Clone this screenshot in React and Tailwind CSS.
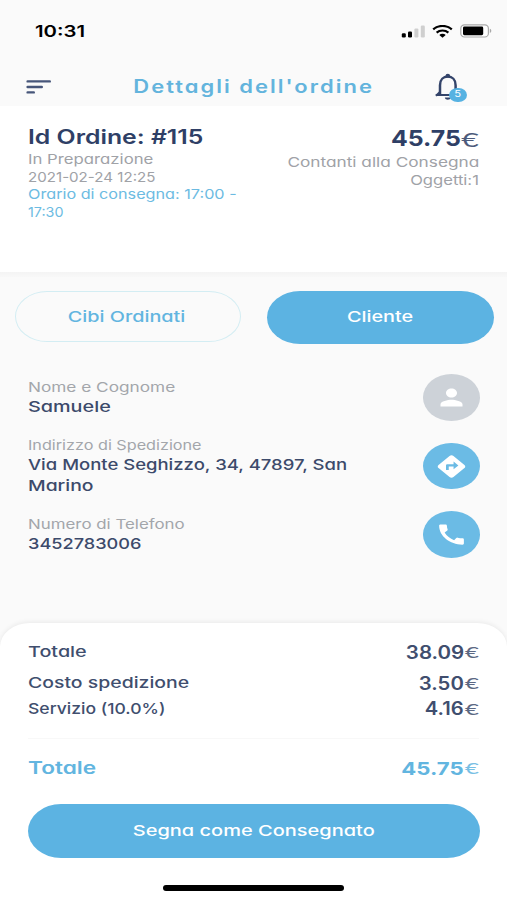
import { clsx } from "clsx";
import { MdCall, MdDirections, MdPerson } from "react-icons/md";

const contacts = [
  {
    label: "Nome e Cognome",
    labelClass: "scale-x-[1.275]",
    lines: [{ text: "Samuele", className: "scale-x-[1.32]" }],
  },
  {
    label: "Indirizzo di Spedizione",
    labelClass: "scale-x-[1.2]",
    lines: [
      { text: "Via Monte Seghizzo, 34, 47897, San", className: "scale-x-[1.233]" },
      { text: "Marino", className: "scale-x-[1.29]" },
    ],
  },
  {
    label: "Numero di Telefono",
    labelClass: "scale-x-[1.25]",
    lines: [{ text: "3452783006", className: "scale-x-[1.21]" }],
  },
];

const actions = [
  { name: "person", Icon: MdPerson, className: "bg-[#cdd2d8]" },
  { name: "directions", Icon: MdDirections, className: "bg-[#6bbbe5]" },
  { name: "call", Icon: MdCall, className: "bg-[#6bbbe5]" },
];

// Wide line of text that keeps its left edge
function Line({ className, children }) {
  return <div className={clsx("w-fit origin-left whitespace-nowrap", className)}>{children}</div>;
}

// Same, anchored on the right
function LineEnd({ className, children }) {
  return <div className={clsx("ml-auto w-fit origin-right whitespace-nowrap", className)}>{children}</div>;
}

function Amount({ value, className, euroClass = "h-[16px] w-[15px] scale-x-[1.5] text-[16px]" }) {
  return (
    <div className="ml-auto flex items-center">
      <span className={clsx("origin-right", className)}>{value}</span>
      <span
        className={clsx(
          "flex origin-right items-end justify-end font-['Lato',sans-serif] leading-none font-normal opacity-85",
          euroClass,
        )}
      >
        €
      </span>
    </div>
  );
}

function StatusBar() {
  return (
    <div className="flex h-[62px] items-center justify-between pl-[35px] pr-[14px] text-black">
      <Line className="scale-x-[1.27] text-[16px] font-semibold">10:31</Line>
      <div className="flex items-center">
        <svg width="25" height="13" viewBox="0 0 25 13" className="mr-[6px]">
          <rect x="0.8" y="8.2" width="4" height="4.2" rx="1.2" fill="#000" />
          <rect x="7" y="6.4" width="4" height="6" rx="1.2" fill="#000" />
          <rect x="13.4" y="3.4" width="4" height="9" rx="1.2" fill="#cfcfcf" />
          <rect x="19.8" y="0.5" width="4" height="11.9" rx="1.2" fill="#cfcfcf" />
        </svg>
        <svg width="21" height="13" viewBox="0 0 21 13" className="mr-[7px]" fill="none" stroke="#000">
          <path d="M1.2 4.4C6.2 -0.2 14.8 -0.2 19.8 4.4" strokeWidth="2.2" />
          <path d="M4.6 7.6C7.8 4.7 13.2 4.7 16.4 7.6" strokeWidth="2.1" />
          <path d="M7.3 9.9C9 8.3 12 8.3 13.7 9.9L10.5 12.7Z" fill="#000" stroke="none" />
        </svg>
        <svg width="33" height="14" viewBox="0 0 33 14">
          <rect x="0.8" y="0.8" width="27.6" height="12.2" rx="3.6" fill="#fff" stroke="#a9a9a9" strokeWidth="1.2" />
          <rect x="3" y="2.6" width="20.2" height="8.6" rx="1.4" fill="#000" />
          <path d="M29.8 4.8C31.8 5.4 31.8 8.4 29.8 9Z" fill="#a9a9a9" />
        </svg>
      </div>
    </div>
  );
}

function Header() {
  return (
    <div className="flex h-[44px] items-center justify-between pl-[26px] pr-[40px] pt-[5px]">
      <svg
        width="26"
        height="16"
        viewBox="0 0 26 16"
        className="mt-px"
        fill="none"
        stroke="#47567a"
        strokeWidth="2.4"
        strokeLinecap="round"
      >
        <path d="M1.6 2.4H23.8M1.6 8H15.8M1.6 13.4H7.8" />
      </svg>
      <h1 className="origin-center scale-x-[1.22] whitespace-nowrap pl-[18px] text-[18px] font-semibold tracking-[1.65px] text-[#63b4dd]">
        Dettagli dell'ordine
      </h1>
      <div className="relative">
        <svg width="33" height="30" viewBox="0 0 33 30" fill="none" stroke="#34446a">
          <path
            d="M6 22.6V13.2C6 7.6 9.4 4.6 13.8 4.6S21.6 7.6 21.6 13.2V22.6"
            strokeWidth="2.5"
          />
          <path d="M2.6 23.2L5.4 20.6M22.2 20.6L25 23.2M2.4 23H25.2" strokeWidth="2" strokeLinecap="round" />
          <ellipse cx="13.8" cy="3.8" rx="2.3" ry="2" fill="#34446a" stroke="none" />
          <path d="M10.8 25.4H16.8C16.4 28.4 11.2 28.4 10.8 25.4Z" fill="#34446a" stroke="none" />
        </svg>
        <span className="absolute right-[0.5px] top-[16px] flex h-[14.5px] w-[17.5px] items-center justify-center rounded-[50%] bg-[#56b2e2] pb-[3px] text-[9px] text-white">
          <span className="scale-x-125">5</span>
        </span>
      </div>
    </div>
  );
}

function OrderSummary() {
  return (
    <div className="flex h-[166px] justify-between bg-white px-[28px] pt-[18px] text-[13.5px] leading-[17.7px] text-[#a0a2a7]">
      <div>
        <Line className="scale-x-[1.24] text-[20px] font-semibold leading-[26px] text-[#2f3f66]">Id Ordine: #115</Line>
        <Line className="mt-px scale-x-[1.24]">In Preparazione</Line>
        <Line className="scale-x-[1.12]">2021-02-24 12:25</Line>
        <Line className="scale-x-[1.2] text-[#6cbbe2]">Orario di consegna: 17:00 -</Line>
        <Line className="scale-x-[1.06] text-[#6cbbe2]">17:30</Line>
      </div>
      <div>
        <div className="flex leading-[29px] text-[#2f3f66]">
          <Amount
            value="45.75"
            className="scale-x-[1.13] text-[22px] font-bold"
            euroClass="h-[20px] w-[18px] scale-x-[1.6] text-[19px]"
          />
        </div>
        <LineEnd className="scale-x-[1.277] leading-[18px]">Contanti alla Consegna</LineEnd>
        <LineEnd className="scale-x-[1.23] leading-[18px]">Oggetti:1</LineEnd>
      </div>
    </div>
  );
}

function CustomerTabs() {
  return (
    <div className="flex items-start justify-between pl-[14.5px] pr-[13.5px] pt-[14px] text-[15px] font-medium">
      <button className="flex h-[51px] w-[226px] items-center justify-center rounded-[32px/25.5px] border border-[#d3edf3] pt-px pr-px">
        <span className="scale-x-[1.32] text-[#62b5e0]">Cibi Ordinati</span>
      </button>
      <button className="flex h-[53px] w-[227px] items-center justify-center rounded-[33px/26.5px] bg-[#5cb3e2] pb-px">
        <span className="scale-x-[1.32] text-white">Cliente</span>
      </button>
    </div>
  );
}

function Customer() {
  return (
    <div className="flex justify-between pl-[28px] pr-[27px] pt-[30px]">
      <div className="flex flex-col gap-[19px] pt-[4px]">
        {contacts.map((c) => (
          <div key={c.label}>
            <Line className={clsx("text-[13.5px] leading-[19px] text-[#a3a6ab]", c.labelClass)}>{c.label}</Line>
            {c.lines.map((l) => (
              <Line key={l.text} className={clsx("text-[15px] font-medium leading-[20.3px] text-[#3c4a6b]", l.className)}>
                {l.text}
              </Line>
            ))}
          </div>
        ))}
      </div>
      <div className="flex flex-col gap-[22px]">
        {actions.map(({ name, Icon, className }) => (
          <button
            key={name}
            className={clsx("flex h-[46.7px] w-[57px] items-center justify-center rounded-[50%]", className)}
          >
            <Icon className="h-[27px] w-[33px] text-white" preserveAspectRatio="none" />
          </button>
        ))}
      </div>
    </div>
  );
}

function Totals() {
  return (
    <div className="h-[277px] rounded-t-[30px_24px] bg-white px-[28px] shadow-[0_-1px_5px_rgba(0,0,0,0.07)]">
      <div className="pt-[16px] text-[15px] font-medium text-[#404e6e]">
        <div className="flex h-[26px] items-center">
          <Line className="pt-px scale-x-[1.32]">Totale</Line>
          <Amount value="38.09" className="scale-x-[1.14] text-[18px] font-semibold" />
        </div>
        <div className="mt-[5px] flex h-[26px] items-center">
          <Line className="pt-px scale-x-[1.295]">Costo spedizione</Line>
          <Amount value="3.50" className="scale-x-[1.13] text-[18px] font-semibold" />
        </div>
        <div className="flex h-[25px] items-center">
          <Line className="pt-px scale-x-[1.17]">Servizio (10.0%)</Line>
          <Amount value="4.16" className="scale-x-[1.12] text-[18px] font-semibold" />
        </div>
      </div>
      <div className="mt-[17px] border-t border-[#f8f8f8]" />
      <div className="mt-[16px] flex h-[26px] items-center text-[17px] font-semibold text-[#62b5e0]">
        <Line className="pt-px scale-x-[1.33]">Totale</Line>
        <Amount value="45.75" className="scale-x-[1.23] text-[18px] font-bold" />
      </div>
      <button className="-mr-px mt-[23px] flex h-[54px] w-[452px] items-center justify-center rounded-[33px/27px] bg-[#5cb3e2] text-[15px] font-medium text-white">
        <span className="scale-x-[1.333]">Segna come Consegnato</span>
      </button>
      <div className="mx-auto mt-[27px] h-[6px] w-[181px] rounded-full bg-black" />
    </div>
  );
}

export default function App() {
  return (
    <div className="flex h-[900px] w-[507px] flex-col overflow-hidden bg-[#fafafa] font-['Inter',sans-serif] [font-feature-settings:'cv11']">
      <StatusBar />
      <Header />
      <OrderSummary />
      <div className="h-[5px] bg-linear-to-b from-[#f4f4f4] to-[#f8f8f8]" />
      <CustomerTabs />
      <Customer />
      <div className="mt-auto">
        <Totals />
      </div>
    </div>
  );
}
